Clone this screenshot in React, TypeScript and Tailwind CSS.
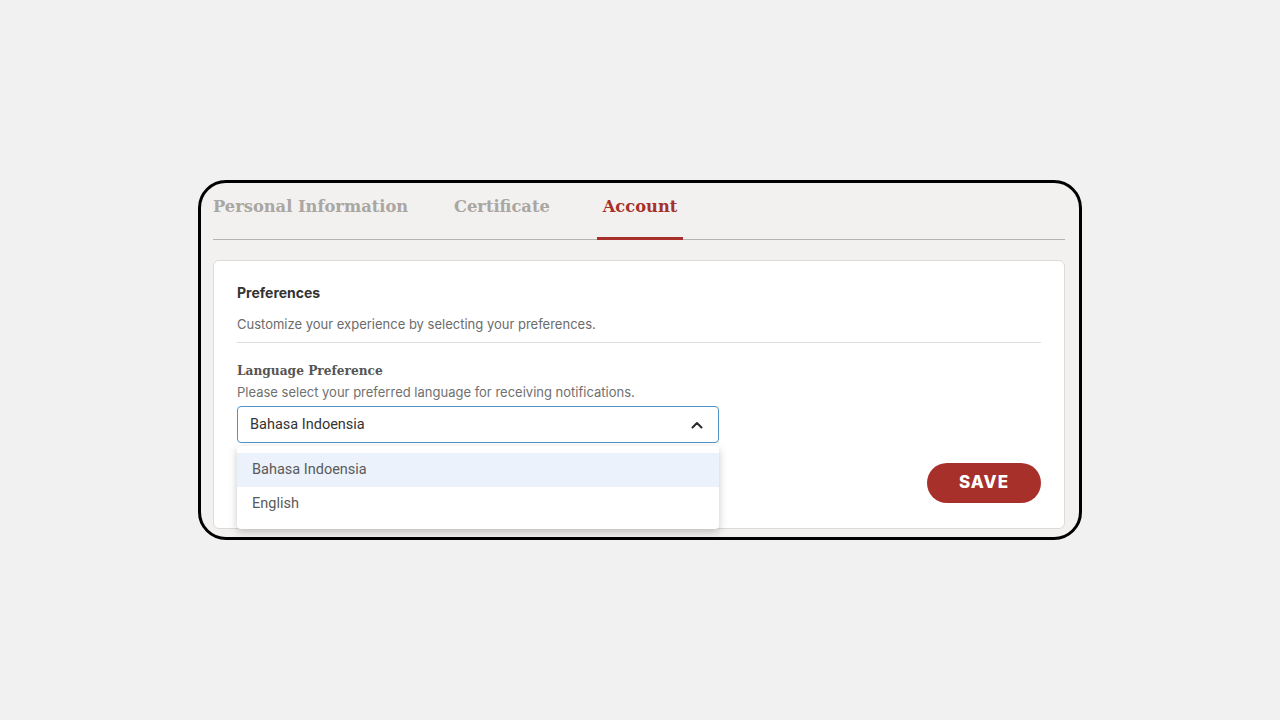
import React from "react";

const slab = { fontFamily: '"DejaVu Serif", "Liberation Serif", serif' };
const sans = { fontFamily: 'Inter, "Noto Sans", sans-serif' };
const roboto = { fontFamily: 'Roboto, "Noto Sans", sans-serif' };

function ChevronUp() {
  return (
    <svg width="14" height="14" viewBox="0 0 14 14" fill="none">
      <path d="M2.5 9.5 L7 5 L11.5 9.5" stroke="#2b2b2b" strokeWidth="2" strokeLinecap="round" strokeLinejoin="round" />
    </svg>
  );
}

export default function App() {
  return (
    <div className="min-h-screen w-full bg-[#f1f1f1] flex items-center justify-center">
      <div className="w-[884px] h-[360px] border-[3px] border-black rounded-[28px] bg-[#f2f1f0] pl-[12px] pr-[14px] pb-[8px] flex flex-col">
        {/* Tabs */}
        <div className="flex items-end border-b border-[#b8b3ae] h-[57px] shrink-0" style={slab}>
          <div className="w-[194px] pb-[20px] text-[16.3px] font-bold text-[#aaa6a2] whitespace-nowrap">Personal Information</div>
          <div className="ml-[47px] w-[96px] pb-[20px] text-[16.3px] font-bold text-[#aaa6a2] whitespace-nowrap">Certificate</div>
          <div className="relative ml-[47px] w-[86px] pb-[20px] text-[16.3px] font-bold text-[#a8302a] whitespace-nowrap text-center">
            Account
            <div className="absolute left-0 right-0 bottom-[-1px] h-[3px] bg-[#a8302a]" />
          </div>
        </div>

        {/* Card */}
        <div className="mt-[20px] flex-1 bg-white border border-[#dddbd9] rounded-[6px] px-[23px] pt-[23px] flex flex-col">
          <div className="text-[14px] leading-[18px] font-bold text-[#333333]" style={sans}>Preferences</div>
          <div className="mt-[13px] text-[13px] leading-[18px] text-[#6b6b6b] pb-[9px] border-b border-[#dedede]" style={sans}>
            Customize your experience by selecting your preferences.
          </div>
          <div className="mt-[19px] text-[12.2px] leading-[18px] font-bold text-[#555555]" style={slab}>Language Preference</div>
          <div className="mt-[4px] text-[13px] leading-[16px] text-[#707070]" style={sans}>
            Please select your preferred language for receiving notifications.
          </div>
          <div className="relative mt-[6px] w-[482px]">
            <div className="h-[37px] border border-[#4f93c9] rounded-[4px] flex items-center justify-between pl-[12px] pr-[14px]">
              <span className="text-[14.5px] text-[#333333]" style={roboto}>Bahasa Indoensia</span>
              <ChevronUp />
            </div>
            <div className="absolute left-0 top-[40px] w-[482px] bg-white rounded-[4px] shadow-[0_3px_8px_rgba(0,0,0,0.22)] pt-[7px] pb-[9px] z-10" style={roboto}>
              <div className="h-[34px] bg-[#ebf2fb] flex items-center pl-[15px] text-[14.5px] text-[#5a5a5a]">Bahasa Indoensia</div>
              <div className="h-[33px] flex items-center pl-[15px] text-[14.5px] text-[#5a5a5a]">English</div>
            </div>
          </div>
          <div className="mt-[20px] flex justify-end">
            <button className="w-[114px] h-[40px] rounded-full bg-[#a8302a] text-white text-[17px] font-extrabold tracking-[0.06em]" style={sans}>
              SAVE
            </button>
          </div>
        </div>
      </div>
    </div>
  );
}
